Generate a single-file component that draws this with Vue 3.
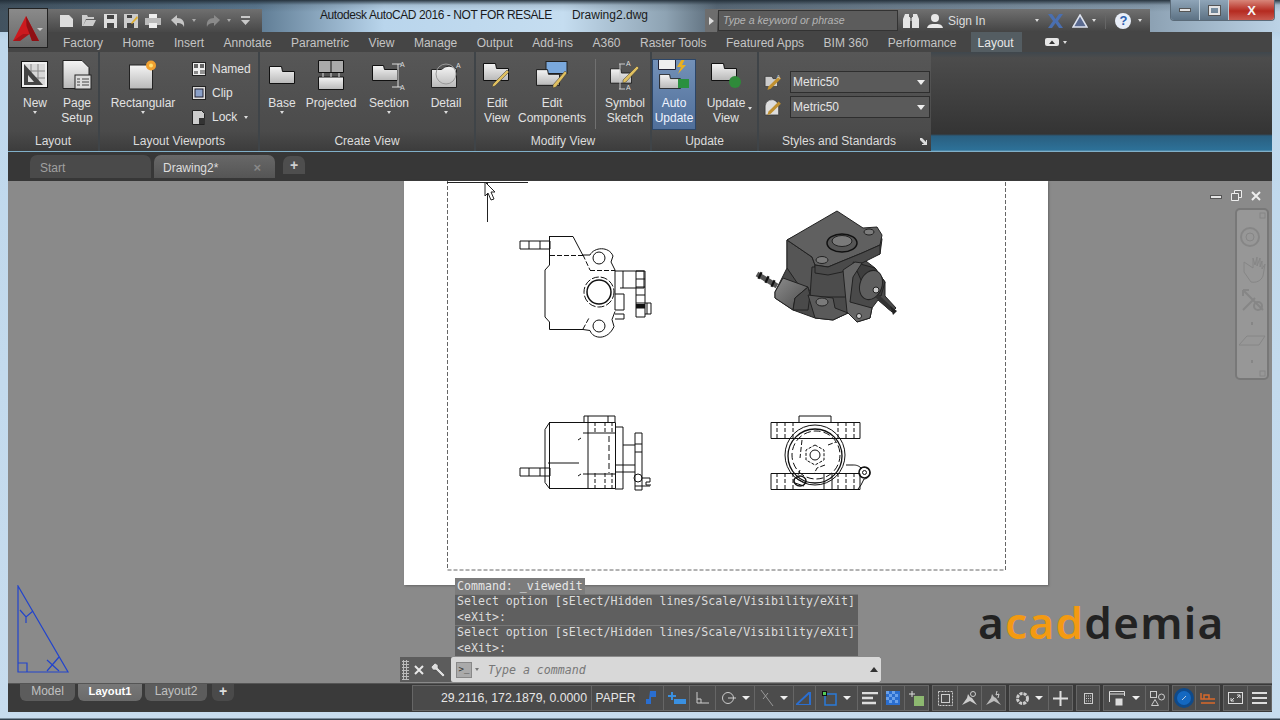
<script setup>
const tabs = ['Factory', 'Home', 'Insert', 'Annotate', 'Parametric', 'View', 'Manage', 'Output', 'Add-ins', 'A360', 'Raster Tools', 'Featured Apps', 'BIM 360', 'Performance']
const history = [
  'Select option [sElect/Hidden lines/Scale/Visibility/eXit]\n<eXit>:',
  'Select option [sElect/Hidden lines/Scale/Visibility/eXit]\n<eXit>:',
]
</script>

<template>
  <div class="window">
    <svg class="defs" width="0" height="0">
      <defs>
        <linearGradient id="sheet" x1="0" y1="0" x2="0" y2="1">
          <stop offset="0" stop-color="#f4f4f4" />
          <stop offset="1" stop-color="#b8b8b8" />
        </linearGradient>
        <linearGradient id="boss" x1="0" y1="0" x2="1" y2="1">
          <stop offset="0" stop-color="#8c8c8c" />
          <stop offset="1" stop-color="#4a4a4a" />
        </linearGradient>
        <symbol id="part" viewBox="0 0 26 18">
          <path d="M.5.5h12l1 5h12v12H.5z" fill="url(#sheet)" stroke="#111" />
        </symbol>
      </defs>
    </svg>

    <div class="appbtn">
      <svg width="26" height="26" viewBox="0 0 26 26">
        <path d="M13 0 L26 25 L19 25 L16.500 18 L10 18 L7 25 L0 25 Z" fill="#cc1a1e" />
        <path d="M13 0 L13.500 10 L16.500 18 L19 25 L26 25 Z" fill="#8f1014" />
        <path d="M0 25 L10 18 L16.500 18 L7 25 Z" fill="#a81418" />
      </svg>
      <i class="caret small"></i>
    </div>

    <header class="titlebar">
      <div class="qat">
        <svg width="15" height="14" viewBox="0 0 15 14"><path d="M1 1h9l4 4v8H1z" fill="#ddd" /></svg>
        <svg width="16" height="13" viewBox="0 0 16 13"><path d="M1 1h5l1 2h6v2H5L2 12H1zM5 6h10l-3 6H2z" fill="#ccc" /></svg>
        <svg width="13" height="14" viewBox="0 0 13 14"><path d="M0 0h13v14H0z" fill="#ddd" /><path d="M3 1h7v4H3zM3 9h7v5H3z" fill="#444" /></svg>
        <svg width="14" height="14" viewBox="0 0 14 14"><path d="M0 0h14v14H0z" fill="#ccc" /><path d="M3 9h7v5H3zM3 1h5v3H3z" fill="#444" /><path d="M7 9l6-7 1 2-6 6z" fill="#e0b030" /></svg>
        <svg width="16" height="14" viewBox="0 0 16 14"><path d="M4 0h8v4H4z" fill="#eee" /><path d="M0 4h16v7H0z" fill="#bbb" /><path d="M4 9h8v5H4z" fill="#eee" /></svg>
        <svg class="gap" width="14" height="12" viewBox="0 0 14 12"><path d="M0 5l6-5v3c5 0 8 3 7 9-1-3-3-4-7-4v3z" fill="#c6c6c6" /></svg>
        <i class="caret dim tiny"></i>
        <svg class="gap" width="14" height="12" viewBox="0 0 14 12"><path d="M14 5L8 0v3C3 3 0 6 1 12c1-3 3-4 7-4v3z" fill="#8a8a8a" /></svg>
        <i class="caret dim tiny"></i>
        <svg class="gap" width="9" height="9" viewBox="0 0 9 9"><path d="M0 0h9v2H0zM0 4h9L4.500 9z" fill="#c8c8c8" /></svg>
      </div>
      <div class="doc-title">
        <span class="product">Autodesk AutoCAD 2016 - NOT FOR RESALE</span>
        <span>Drawing2.dwg</span>
      </div>
      <div class="info">
        <span class="expander"><i></i></span>
        <div class="search">Type a keyword or phrase</div>
        <svg class="bino" width="16" height="15" viewBox="0 0 16 15"><path d="M2 1h4v3h1v11H0V6zM10 1h4l2 5v9H9V4h1z" fill="#e4e4e4" /><path d="M7 5h2v3H7z" fill="#999" /></svg>
        <svg class="user" width="16" height="16" viewBox="0 0 16 16"><circle cx="8" cy="5" r="4" fill="#e8e8e8" /><path d="M0 15c1-4 4-4 8-4s7 0 8 4z" fill="#e8e8e8" /></svg>
        <span class="signin">Sign In</span>
        <i class="caret tiny signcaret"></i>
        <svg class="x-ico" width="15" height="14" viewBox="0 0 15 14"><path d="M0 0h4l3.500 5L11 0h4L10 7l5 7h-4L7.500 9 4 14H0l5-7z" fill="#4a6fb0" /></svg>
        <svg class="a-ico" width="16" height="14" viewBox="0 0 16 14"><path d="M8 1l7 12H1z" fill="#5a6a90" stroke="#dfe4f0" stroke-width="1.500" /></svg>
        <i class="caret tiny"></i>
        <span class="info-sep"></span>
        <span class="help">?</span>
        <i class="caret tiny"></i>
      </div>
      <div class="winbtns">
        <span class="wb"><b class="min"></b></span>
        <span class="wb"><b class="max"></b></span>
        <span class="wb close">X</span>
      </div>
    </header>

    <nav class="tabs">
      <span v-for="t in tabs" :key="t" class="tab">{{ t }}</span>
      <span class="tab active">Layout</span>
      <span class="tab-extra">
        <svg width="14" height="8" viewBox="0 0 14 8"><rect width="14" height="8" rx="2" fill="#e6e6e6" /><path d="M4 6l3-3.500L10 6z" fill="#333" /></svg>
        <i class="caret tiny"></i>
      </span>
    </nav>

    <section class="ribbon">
      <div class="panels">
        <div class="panel p-layout">
          <div class="body">
            <div class="rbtn w42">
              <svg width="28" height="28" viewBox="0 0 28 28"><rect x=".5" y=".5" width="26" height="26" fill="#eee" stroke="#111" /><path d="M3 3h21v21H3z" fill="#d8d8d8" /><path d="M10 3v21M17 3v21M3 10h21M3 17h21" stroke="#888" /><path d="M3 3l19 21H3z" fill="#444" /><path d="M7 14l6 7H7z" fill="#ddd" /></svg>
              <span>New</span><i class="caret tiny"></i>
            </div>
            <div class="rbtn w42">
              <svg width="30" height="30" viewBox="0 0 30 30"><path d="M1 .5h19l7 7v21H1z" fill="url(#sheet)" stroke="#222" /><rect x="13" y="15" width="16" height="14" fill="#ddd" stroke="#222" /><path d="M15 19h3M20 19h7M15 22h3M20 22h7M15 25h3M20 25h7" stroke="#444" /></svg>
              <span>Page<br />Setup</span>
            </div>
          </div>
          <div class="label">Layout</div>
        </div>

        <div class="panel p-vp">
          <div class="body">
            <div class="rbtn w86">
              <svg width="28" height="29" viewBox="0 0 28 29"><rect x=".5" y="4.500" width="23" height="24" fill="url(#sheet)" stroke="#222" /><circle cx="22" cy="5" r="5" fill="#f0a030" /><circle cx="22" cy="5" r="2" fill="#ffe070" /></svg>
              <span>Rectangular</span><i class="caret tiny"></i>
            </div>
            <div class="vp-list">
              <div class="vp-row">
                <svg width="14" height="14" viewBox="0 0 14 14"><rect x=".5" y=".5" width="13" height="13" fill="#eee" stroke="#222" /><path d="M2 2h4v4H2zM8 2h4v4H8z" fill="#666" /><path d="M2 9h4v3H2z" fill="#888" /><path d="M8 9h5M8 11h5" stroke="#333" /></svg>
                Named
              </div>
              <div class="vp-row">
                <svg width="14" height="14" viewBox="0 0 14 14"><rect x=".5" y=".5" width="13" height="13" fill="#ddd" stroke="#222" /><rect x="3" y="3" width="8" height="8" fill="#8aa0c8" stroke="#223" /></svg>
                Clip
              </div>
              <div class="vp-row">
                <svg width="14" height="15" viewBox="0 0 14 15"><path d="M.5.5h9l3 3v11H.5z" fill="#ccc" stroke="#222" /><rect x="7" y="8" width="6" height="6" fill="#333" /></svg>
                Lock <i class="caret tiny"></i>
              </div>
            </div>
          </div>
          <div class="label">Layout Viewports</div>
        </div>

        <div class="panel p-create">
          <div class="body">
            <div class="rbtn w44">
              <svg class="part-top" width="26" height="18"><use href="#part" /></svg>
              <span>Base</span><i class="caret tiny"></i>
            </div>
            <div class="rbtn w54">
              <svg width="26" height="30" viewBox="0 0 26 30"><path d="M.5.5h25v12H.5z" fill="#aaa" stroke="#111" /><path d="M13 .5v12" stroke="#111" /><path d="M.5 17h25v12.500H.5z" fill="url(#sheet)" stroke="#111" /><path d="M5 13v4M13 13v4M21 13v4" stroke="#ddd" /></svg>
              <span>Projected</span>
            </div>
            <div class="rbtn w62">
              <svg width="34" height="30" viewBox="0 0 34 30"><path d="M.5 5.500h11l1 4h13v11H.5z" fill="url(#sheet)" stroke="#111" /><path d="M20 4h6v23h-6M26 4l3 0M26 27l3 0" fill="none" stroke="#ddd" /><text x="28" y="7" class="tinytext">A</text><text x="28" y="30" class="tinytext">A</text></svg>
              <span>Section</span><i class="caret tiny"></i>
            </div>
            <div class="rbtn w52">
              <svg width="30" height="28" viewBox="0 0 30 28"><path d="M.5 8.500h10a10 10 0 0 1 15 0v18H.500z" fill="url(#sheet)" stroke="#222" /><circle cx="15" cy="13" r="10" fill="none" stroke="#999" /><text x="25" y="7" class="tinytext">A</text></svg>
              <span>Detail</span><i class="caret tiny"></i>
            </div>
          </div>
          <div class="label">Create View</div>
        </div>

        <div class="panel p-modify">
          <div class="body">
            <div class="rbtn w42">
              <svg width="28" height="28" viewBox="0 0 28 28"><use href="#part" width="26" height="18" y="2" /><path d="M9 26l3-1 14-14-2-2-14 14z" fill="#e0c060" stroke="#333" stroke-width=".5" /></svg>
              <span>Edit<br />View</span>
            </div>
            <div class="rbtn w68">
              <svg width="32" height="28" viewBox="0 0 32 28"><rect x="10" y=".5" width="21" height="12" fill="#7aa8dc" stroke="#222" /><use href="#part" width="24" height="17" y="8" /><path d="M17 27l3-1 11-14-2-2-12 14z" fill="#e0c060" stroke="#333" stroke-width=".5" /></svg>
              <span>Edit<br />Components</span>
            </div>
            <span class="vsep"></span>
            <div class="rbtn w48">
              <svg width="30" height="32" viewBox="0 0 30 32"><use href="#part" width="22" height="16" y="9" /><path d="M9 5h6M9 30h6M10 5v25" fill="none" stroke="#ccc" /><path d="M13 24l3-1 13-14-2-2-14 14z" fill="#e0c060" stroke="#333" stroke-width=".5" /><text x="16" y="7" class="tinytext">A</text><text x="16" y="31" class="tinytext">A</text></svg>
              <span>Symbol<br />Sketch</span>
            </div>
          </div>
          <div class="label">Modify View</div>
        </div>

        <div class="panel p-update">
          <div class="body">
            <div class="rbtn w44 on">
              <svg width="32" height="32" viewBox="0 0 32 32"><path d="M.5.5h17v10H.5z" fill="#eee" stroke="#223" /><use href="#part" width="24" height="15" y="15" /><path d="M24 0l-5 8h4l-3 7 8-9h-4l3-6z" fill="#e8b020" /><rect x="20" y="20" width="11" height="9" fill="#2a9040" /></svg>
              <span>Auto<br />Update</span>
            </div>
            <div class="rbtn w60">
              <svg width="30" height="28" viewBox="0 0 30 28"><use href="#part" width="26" height="18" y="2" /><circle cx="24" cy="21" r="6" fill="#2f8a3a" /></svg>
              <span>Update<br />View</span>
              <i class="caret tiny side"></i>
            </div>
          </div>
          <div class="label">Update</div>
        </div>

        <div class="panel p-styles">
          <div class="body styles">
            <div class="style-row">
              <svg width="18" height="18" viewBox="0 0 16 16"><path d="M1 3h6l1 2h4v7H1z" fill="#ccc" stroke="#222" stroke-width=".5" /><path d="M3 15l3-1 9-9-2-2-9 9z" fill="#c09030" /><text x="11" y="5" class="tinytext small">A</text></svg>
              <div class="combo">Metric50<i class="caret"></i></div>
            </div>
            <div class="style-row">
              <svg width="18" height="18" viewBox="0 0 16 16"><path d="M1 7a6 6 0 0 1 10-4l2 3v9H1z" fill="#ddd" stroke="#222" stroke-width=".5" /><path d="M3 15l3-1 9-9-2-2-9 9z" fill="#c09030" /></svg>
              <div class="combo">Metric50<i class="caret"></i></div>
            </div>
          </div>
          <div class="label styles-label">
            Styles and Standards
            <svg class="launch" width="7" height="7" viewBox="0 0 7 7"><path d="M0 0h2l4 4V2h1v5H2V6h2L0 2z" fill="#ddd" /></svg>
          </div>
        </div>
      </div>
    </section>

    <div class="filetabs">
      <span class="ftab">Start</span>
      <span class="ftab cur">Drawing2*<em>×</em></span>
      <span class="ftab add">+</span>
    </div>

    <main class="canvas">
      <div class="paper">
        <svg class="sheet" width="644" height="404" viewBox="404 181 644 404">
          <rect x="447.500" y="170" width="558" height="400" fill="none" stroke="#666" stroke-dasharray="4 2" />

          <!-- crosshair and cursor -->
          <path d="M447 182.500h81M487.500 182v40" stroke="#222" fill="none" />
          <path d="M485 182v14l3-3 3 7 3-1-3-7h4z" fill="#fff" stroke="#222" />

          <!-- top left view -->
          <g fill="none" stroke="#111">
            <path d="M550 236.500h23l10 19" />
            <path d="M549.500 236v29l-4.500 5v47l4.500 5v7.500H583l7 1c3 9 18 10 24-4l-2-7 3-8" />
            <path d="M583 255h7c4-8 19-9 23 1l-2 6 4 8v40" />
            <path d="M550 255.500h33M590 270.500h25M583 255l7 15M583 329l6-11" stroke-dasharray="5 2" />
            <circle cx="599" cy="258" r="6" />
            <circle cx="599" cy="326" r="6" />
            <circle cx="599" cy="292" r="12" stroke-width="1.500" />
            <circle cx="599" cy="292" r="15" stroke-dasharray="7 2" />
            <path d="M520 241h30v8h-30zM529 241v8M540 241v8" />
            <path d="M615 271h29v17h-24M623 271v17M615 310h9v-16h-9M615 314h9v5h-9" />
            <path d="M636 271v46h9v-46zM636 279h9M636 287h9M636 295h9M636 303h9M636 308h9" />
            <path d="M645 303h6v11h-6M647 303v11" />
          </g>
          <rect x="636" y="304" width="9" height="4" fill="#111" />

          <!-- isometric view -->
          <path d="M757 274l20 12" stroke="#555" stroke-width="5" />
          <path d="M759 275l2 1M766 279l2 1M772 283l2 1" stroke="#111" stroke-width="7" />
          <path d="M787 240v28l-12 24v6l18 12 22 8 18 2 15-7 9 9 13-4 2-10 6-8 14 12 4-4-11-12v-14l-10-14-13-10 18-4 2-15-5-8-14 1-26-17z" fill="#4a4a4a" stroke="#222" />
          <path d="M787 240l25 17 3 8-3 26-12-4-13-19z" fill="#555" stroke="#222" />
          <path d="M812 267h33l5 30h-40z" fill="#4c4c4c" stroke="#222" />
          <path d="M787 240l50-29 26 17 14-1 5 8-2 10-18 8-22 9-12 5-13-2-3-8z" fill="#606060" stroke="#222" />
          <path d="M840 262l22-9 18-8v9l-20 10-18 8-14 3-13-2v-8l13 2z" fill="#4a4a4a" stroke="#222" />
          <ellipse cx="842" cy="243" rx="15" ry="9" fill="#565656" stroke="#111" stroke-width="1.500" />
          <ellipse cx="842" cy="241" rx="10" ry="5.500" fill="#7a7a7a" stroke="#222" />
          <ellipse cx="822" cy="260" rx="6" ry="3.500" fill="#7c7c7c" stroke="#222" />
          <ellipse cx="869" cy="232" rx="5" ry="3" fill="#7c7c7c" stroke="#222" />
          <path d="M775 292l8-14 14 5 11 4-13 11-2 12-18-12z" fill="url(#boss)" stroke="#222" />
          <path d="M795 298l13-11 2 8-2 15-15 0z" fill="#4a4a4a" stroke="#222" />
          <path d="M808 295l25 3 2 10 13 5-15 7-18-2-3-10z" fill="#5a5a5a" stroke="#222" />
          <ellipse cx="822" cy="302" rx="6" ry="4" fill="#7a7a7a" stroke="#222" />
          <path d="M853 262l22 6 10 14-4 14-12-2-8-14z" fill="#3e3e3e" stroke="#222" />
          <path d="M843 270l12-8 7 1-9 14-3 25 22 6-2 10-13 4-10-10z" fill="#666" stroke="#222" />
          <ellipse cx="871" cy="285" rx="11" ry="15" transform="rotate(20 871 285)" fill="#5e5e5e" stroke="#222" />
          <path d="M877 296l14 13" stroke="#333" stroke-width="4" />
          <circle cx="876" cy="290" r="3" fill="#ccc" stroke="#222" />
          <circle cx="859" cy="316" r="2.500" fill="#ccc" stroke="#222" />
          <path d="M890 306l7 5-4 4z" fill="#222" />

          <!-- bottom left view -->
          <g fill="none" stroke="#111">
            <path d="M549.500 422.500H615.500V488.500H549.500l-4.500-6v-53zM549.500 422v67" />
            <path d="M584 422v-6h31v6M588 416v6M608 416v6" />
            <path d="M595 422v12M605 422v12M612 422v12M595 473v16M605 473v16M612 473v16" stroke-dasharray="4 2" />
            <path d="M609 436v37" stroke-dasharray="6 3" />
            <path d="M548 463h31M581 438l-3 2M581 474l-3 2" />
            <path d="M588 422v67M583 433h32M583 474h32" />
            <path d="M615 427h8v62h-8M623 445h12M615 465h20M615 472h20M635 433h7v57h-7v-57M635 444h7M635 452h7" />
            <path d="M520 468h30v8h-30zM529 468v8M540 468v8" />
            <circle cx="638" cy="478" r="4" />
            <path d="M642 478h8v4h-4v3h5M635 486h15" />
          </g>

          <!-- bottom right view -->
          <g fill="none" stroke="#111">
            <path d="M771 422.500h89v16h-89zM771 473.500h89v16h-89zM799 422v-6h32v6" />
            <path d="M777 422v16M785 422v16M793 422v16M838 422v16M846 422v16M854 422v16M777 473v16M785 473v16M793 473v16M838 473v16M846 473v16M854 473v16" stroke-dasharray="4 2" />
            <circle cx="815" cy="455" r="30" />
            <circle cx="815" cy="456" r="27" stroke-width="1.300" />
            <circle cx="816" cy="455" r="24" stroke-dasharray="7 3" />
            <circle cx="815" cy="455" r="5" />
            <path d="M815 445l9 5v10l-9 5-9-5v-10z" stroke-dasharray="3 1.500" />
            <path d="M802 440l-2 18M828 445l8-3M825 465l-8 3-3 6M800 470l-3 8" stroke-dasharray="5 2" />
            <path d="M846 465h7c2 0 5 0 8 3 4-2 9 1 9 5s-4 6-6 6l-3 6-3 4" />
            <circle cx="864.500" cy="472.500" r="5.500" stroke-width="1.500" />
            <circle cx="864.500" cy="472.500" r="2" />
            <ellipse cx="800" cy="481" rx="6" ry="5" stroke-width="1.500" />
            <path d="M796 478l9 5M795 483l9 3M824 473v16M832 473v16" />
          </g>
        </svg>
      </div>

      <div class="vpctl">
        <b class="min"></b>
        <svg width="11" height="11" viewBox="0 0 11 11"><path d="M3.500.5h7v7h-7z" fill="#777" stroke="#eee" /><path d="M.5 3.500h7v7h-7z" fill="#777" stroke="#eee" /></svg>
        <svg width="10" height="10" viewBox="0 0 10 10"><path d="M1 1l8 8M9 1l-8 8" stroke="#eee" stroke-width="2" /></svg>
      </div>

      <div class="navbar">
        <svg width="30" height="168" viewBox="0 0 30 168" fill="none" stroke="#868686">
          <rect x="23" y="3" width="5" height="5" />
          <circle cx="13" cy="27" r="9" stroke-width="2" />
          <circle cx="13" cy="27" r="4" />
          <path d="M7 52v10l7 10c5 1 10-1 12-6l2-12-3 5v-8l-2 6v-9l-3 8v-9l-2 8-2-7v10z" />
          <path d="M6 80l20 20M6 100l12-12M6 80h6M6 80v6" stroke-width="2" />
          <circle cx="21" cy="96" r="4" stroke-width="2" />
          <path d="M15 112v3M15 150v3" stroke-width="2" />
          <path d="M2 135l8-9h18l-6 9z" />
          <rect x="23" y="161" width="5" height="5" />
        </svg>
      </div>

      <svg class="ucs" width="54" height="90" viewBox="0 0 54 90" fill="none" stroke="#2244cc" stroke-width="1.200">
        <path d="M2 1v86h50z" />
        <path d="M2 78h9v9" />
        <path d="M4 25l6 7 7-6M10 32v6M31 75l12 11M43 72L31 86" />
      </svg>

      <div class="logo"><span>a</span><span class="cad">cad</span><span>demia</span></div>

      <div class="cmd">
        <div class="lines">
          <div class="line first">Command:  _viewedit</div>
          <div v-for="(h, i) in history" :key="i" class="line">{{ h }}</div>
        </div>
        <div class="cmd-bar">
          <span class="grip"></span>
          <svg width="10" height="10" viewBox="0 0 10 10"><path d="M1 1l8 8M9 1l-8 8" stroke="#e8e8e8" stroke-width="2" /></svg>
          <svg width="15" height="15" viewBox="0 0 15 15"><path d="M1 4l3-3 3 2v3l7 7-2 2-7-7H2L0 5z" fill="#ddd" stroke="#333" stroke-width=".5" /></svg>
          <div class="cmd-input">
            <span class="prompt">&gt;_</span>
            <i class="caret tiny grey"></i>
            <span class="ph">Type a command</span>
            <i class="caret up"></i>
          </div>
        </div>
      </div>
    </main>

    <footer class="statusbar">
      <div class="ltabs">
        <span class="ltab">Model</span>
        <span class="ltab cur">Layout1</span>
        <span class="ltab l2">Layout2</span>
        <span class="ltab add">+</span>
      </div>
      <div class="status">
        <span class="coords">29.2116, 172.1879, 0.0000</span>
        <span class="paper-btn">PAPER</span>

        <span class="s w25"><svg width="11" height="16" viewBox="0 0 11 16"><path d="M4 1h6v6H5v7H0V9h3z" fill="#2a6ed0" /></svg></span>
        <span class="s w26"><svg width="18" height="14" viewBox="0 0 18 14"><path d="M4 1v8M0 5h8" stroke="#3a90e0" stroke-width="2" /><rect x="6" y="8" width="12" height="5" fill="#3a90e0" /></svg></span>
        <span class="s w26"><svg width="13" height="12" viewBox="0 0 13 12" fill="none" stroke="#ccc"><path d="M1 0v11h12M1 7h4v4" /></svg></span>
        <span class="s w39">
          <svg width="15" height="14" viewBox="0 0 15 14" fill="none" stroke="#ccc"><circle cx="7" cy="7" r="5.500" /><path d="M7 7h8" /></svg>
          <i class="caret tiny w"></i>
        </span>
        <span class="s w39">
          <svg width="14" height="18" viewBox="0 0 14 18" fill="none" stroke="#999"><path d="M1 1l12 16M8 4l-5 6" /></svg>
          <i class="caret tiny w"></i>
        </span>
        <span class="s w22"><svg width="17" height="13" viewBox="0 0 17 13"><path d="M0 13L14 0v13z" fill="none" stroke="#2a6ed0" stroke-width="2" /></svg></span>
        <span class="s w42">
          <svg width="15" height="15" viewBox="0 0 15 15"><rect x="3" y="3" width="11" height="11" fill="none" stroke="#2a7ad8" stroke-width="1.500" /><rect x="0" y="0" width="5" height="5" fill="#111" /><rect x="1" y="1" width="3" height="3" fill="#5c5" /></svg>
          <i class="caret tiny w"></i>
        </span>
        <span class="s w24"><svg width="16" height="13" viewBox="0 0 16 13"><path d="M0 1h16M0 6h11M0 11h14" stroke="#ddd" stroke-width="2.500" /></svg></span>
        <span class="s w23"><svg width="14" height="14" viewBox="0 0 14 14"><rect width="14" height="14" fill="#2a6ed0" /><path d="M0 0h3v3H0zM6 0h3v3H6zM3 3h3v3H3zM9 3h3v3H9zM0 6h3v3H0zM6 6h3v3H6zM3 9h3v3H3zM9 9h3v3H9z" fill="#6aa0e8" /></svg></span>
        <span class="s w24"><svg width="15" height="15" viewBox="0 0 15 15"><rect x="5" y="5" width="10" height="10" fill="#8db870" /><path d="M3 0v6M0 3h6" stroke="#ddd" /></svg></span>

        <span class="s w26 lead"><svg width="15" height="15" viewBox="0 0 15 15" fill="none" stroke="#ccc"><rect x=".5" y=".5" width="14" height="14" stroke-dasharray="2 1" /><rect x="3.500" y="3.500" width="8" height="8" /></svg></span>
        <span class="s w24"><svg width="16" height="15" viewBox="0 0 16 15"><path d="M0 14l5-7 1-4 2 3 2 1 5 7-7-4z" fill="#ccc" /><circle cx="11" cy="3" r="2.500" fill="none" stroke="#ccc" /></svg></span>
        <span class="s w24"><svg width="16" height="15" viewBox="0 0 16 15"><path d="M0 14l5-7 1-4 2 3 2 1 5 7-7-4z" fill="#bbb" /><path d="M11 0l-1 4 3-1-1 4" fill="none" stroke="#ccc" /></svg></span>

        <span class="s w40 lead">
          <svg width="13" height="13" viewBox="0 0 13 13"><circle cx="6.500" cy="6.500" r="5" fill="none" stroke="#ccc" stroke-width="3" stroke-dasharray="3 1" /></svg>
          <i class="caret tiny w"></i>
        </span>
        <span class="s w24"><svg width="15" height="15" viewBox="0 0 15 15"><path d="M7.500 0v15M0 7.500h15" stroke="#ddd" stroke-width="2" /></svg></span>
        <span class="s w24 lead"><svg width="9" height="11" viewBox="0 0 9 11"><rect x=".5" y=".5" width="8" height="10" fill="none" stroke="#ccc" /><path d="M2 3h5M2 5.500h5M2 8h5" stroke="#ccc" stroke-dasharray="1 1" /></svg></span>
        <span class="s w43 lead">
          <svg width="17" height="15" viewBox="0 0 17 15" fill="none" stroke="#ddd"><path d="M.5 11V.5h15V5M.5 3h15" /><rect x="7" y="8" width="6" height="6" fill="#ddd" /></svg>
          <i class="caret tiny w"></i>
        </span>
        <span class="s w23"><svg width="15" height="15" viewBox="0 0 15 15" fill="none" stroke="#ccc"><rect x=".5" y=".5" width="6" height="6" /><circle cx="11.500" cy="6" r="3" /><path d="M5 8.500l3.500 6h-7z" /></svg></span>
        <span class="s w24 lead"><span class="globe"><svg width="14" height="14" viewBox="0 0 14 14"><circle cx="7" cy="7" r="7" fill="#1468c0" /><path d="M5 9l4-4" stroke="#bcd" /></svg></span></span>
        <span class="s w24"><svg width="15" height="11" viewBox="0 0 15 11" fill="none" stroke="#d8682a" stroke-width="1.500"><path d="M1 0v6h14M4 6V2h5v4M1 10h14" /></svg></span>
        <span class="s w25 lead"><svg width="15" height="12" viewBox="0 0 15 12"><rect x=".5" y=".5" width="14" height="11" fill="none" stroke="#ddd" /><path d="M3 9l3-3M3 6v3h3M12 3L9 6M9 3h3v3" stroke="#ddd" fill="none" /></svg></span>
        <span class="s w24"><svg width="15" height="12" viewBox="0 0 15 12"><path d="M0 1h15M0 6h15M0 11h15" stroke="#ddd" stroke-width="2" /></svg></span>
      </div>
    </footer>
  </div>
</template>

<style scoped>
.window {
  position: relative;
  width: 1280px;
  height: 720px;
  box-sizing: border-box;
  padding: 0 8px 8px;
  overflow: hidden;
  display: flex;
  flex-direction: column;
  background: linear-gradient(180deg, #26333d 0, #9bbad3 3px, #bfd8ec 40px, #c7dcee 718px, #33424e 719px);
  font-family: "Liberation Sans", "Noto Sans", sans-serif;
  font-size: 12px;
  color: #e4e4e4;
}
.defs { position: absolute; }

.caret { display: inline-block; width: 0; height: 0; border: 4px solid transparent; border-top: 5px solid #eee; border-bottom: 0; }
.caret.tiny { border-width: 3px 2.500px 0; border-top-color: #ddd; }
.caret.tiny.dim { border-top-color: #aaa; }
.caret.tiny.grey { border-top-color: #777; }
.caret.tiny.w { border-width: 4px 4px 0; border-top-color: #eee; }
.caret.small { border-width: 3px 3px 0; border-top-color: #ccc; }
.caret.up { border-top: 0; border-bottom: 5px solid #333; }

.appbtn {
  position: absolute;
  left: 8px;
  top: 8px;
  z-index: 2;
  width: 40px;
  height: 40px;
  box-sizing: border-box;
  padding: 7px 0 0 4px;
  border: 1px solid #222;
  background: linear-gradient(180deg, #8a8a8a, #6a6a6a);
}
.appbtn .caret { position: absolute; right: 4px; top: 19px; }

/* title row */
.titlebar {
  height: 32px;
  flex: none;
  display: flex;
  align-items: flex-end;
  margin: 0 -8px;
  padding: 0 8px;
  background:
    linear-gradient(180deg, rgba(34, 46, 56, .95) 0, rgba(34, 46, 56, .15) 5px, rgba(34, 46, 56, 0) 12px),
    linear-gradient(90deg, #42525f 0, #5d7a92 20%, #b9d5ec 30%, #c5ddf0 44%, #8ea3b3 52%, #5a6a78 56%, #8da2b4 90%, #bcd3e6 100%);
}
.qat {
  margin-left: 40px;
  width: 214px;
  height: 23px;
  box-sizing: border-box;
  padding-left: 11px;
  display: flex;
  align-items: center;
  gap: 7px;
  background: linear-gradient(180deg, #6f6f6f, #484848);
}
.qat .gap { margin-left: 3px; }
.doc-title {
  position: absolute;
  left: 320px;
  top: 7px;
  display: flex;
  gap: 20px;
  color: #1a1a1a;
  font-size: 12px;
  line-height: 17px;
}
.product { letter-spacing: -.42px; }
.info {
  position: absolute;
  left: 705px;
  top: 9px;
  width: 445px;
  height: 23px;
  display: flex;
  align-items: center;
  background: linear-gradient(180deg, #707070, #444);
}
.expander { width: 12px; height: 23px; display: flex; align-items: center; justify-content: center; background: #6d6d6d; }
.expander i { border: 4px solid transparent; border-left: 5px solid #ddd; border-right: 0; }
.search {
  width: 180px;
  height: 21px;
  margin-left: 1px;
  padding-left: 4px;
  box-sizing: border-box;
  border: 1px solid #333;
  background: #5c5c5c;
  color: #b4b4b4;
  font-size: 10.600px;
  font-style: italic;
  line-height: 18px;
}
.bino { margin-left: 5px; }
.user { margin-left: 8px; }
.signin { margin-left: 5px; color: #ddd; }
.signcaret { margin-left: 50px; }
.x-ico { margin-left: 9px; }
.a-ico { margin-left: 9px; margin-right: 4px; }
.info-sep { width: 1px; height: 16px; margin: 0 9px; background: #666; }
.help {
  width: 16px;
  height: 16px;
  margin-right: 7px;
  border-radius: 50%;
  background: #e8eef8;
  color: #2d5fb0;
  font-weight: 700;
  font-size: 13px;
  line-height: 16px;
  text-align: center;
}
.winbtns { position: absolute; left: 1170px; top: 0; display: flex; height: 20px; border: 1px solid #5a6a78; border-top: 0; border-radius: 0 0 4px 4px; overflow: hidden; }
.wb { width: 28px; height: 20px; display: flex; align-items: center; justify-content: center; background: linear-gradient(180deg, #8fa5b8, #5d7284); border-right: 1px solid #b8c8d4; }
.wb.close { width: 45px; border: 0; background: linear-gradient(180deg, #d8867a, #b52a20 55%, #c85a50); color: #f4f4f4; font-weight: 700; font-size: 13px; }
.min { display: block; width: 12px; height: 4px; background: #e4e4e4; border: 1px solid #555; box-sizing: border-box; }
.max { display: block; width: 11px; height: 9px; border: 2px solid #e4e4e4; box-sizing: border-box; outline: 1px solid #555; }

/* ribbon tabs */
.tabs {
  height: 20px;
  flex: none;
  display: flex;
  gap: 19.500px;
  padding-left: 55px;
  align-items: center;
  background: #454545;
  color: #c4c4c4;
}
.tab { height: 20px; line-height: 23px; white-space: nowrap; }
.tab.active { margin-left: -5.400px; padding: 0 8px 0 7px; background: #545d62; color: #e8e8e8; }
.tab-extra { margin-left: 4px; display: flex; align-items: center; gap: 4px; }

/* ribbon */
.ribbon {
  height: 100px;
  flex: none;
  box-sizing: border-box;
  background: linear-gradient(180deg, #3f474d 0, #4c4c4c 6px, #343434 82px, #2a5f80 84px, #2d7198 98px, #9cc4d8 100%);
}
.panels { display: flex; height: 99px; width: 923px; background: linear-gradient(180deg, #575757, #484848); }
.panel { display: flex; flex-direction: column; border-right: 2px solid #3f4448; box-sizing: border-box; }
.p-layout { width: 92px; }
.p-vp { width: 160px; }
.p-create { width: 216px; }
.p-modify { width: 176px; }
.p-update { width: 107px; }
.p-styles { width: 172px; border-right: 0; }
.body { flex: 1; display: flex; padding-top: 7px; min-height: 0; }
.p-layout .body { padding-left: 6px; }
.label {
  position: relative;
  height: 20px;
  line-height: 21px;
  text-align: center;
  background: linear-gradient(180deg, #4b4b4b, #3c3c3c);
  color: #dcdcdc;
}
.styles-label { padding-right: 12px; }
.launch { position: absolute; right: 4px; top: 7px; }
.rbtn {
  position: relative;
  height: 71px;
  flex: none;
  display: flex;
  flex-direction: column;
  align-items: center;
  text-align: center;
  line-height: 15px;
  color: #e2e2e2;
}
.rbtn svg { height: 32px; margin-bottom: 5px; flex: none; overflow: visible; }
.rbtn span { display: block; }
.rbtn .side { position: absolute; right: 4px; top: 48px; }
.rbtn.on { background: linear-gradient(180deg, #7391b8, #4f6e99); outline: 1px solid #2c4668; outline-offset: -1px; color: #f0f4ff; }
.w42 { width: 42px; }
.w44 { width: 44px; }
.w48 { width: 48px; }
.w52 { width: 52px; }
.w54 { width: 54px; }
.w60 { width: 60px; }
.w62 { width: 62px; }
.w68 { width: 68px; }
.w86 { width: 86px; }
.vsep { width: 1px; height: 70px; margin: 0 5px 0 9px; background: #707070; flex: none; }
.vp-list { margin: -2px 0 0 6px; display: flex; flex-direction: column; gap: 0; }
.vp-row { height: 24px; display: flex; align-items: center; gap: 6px; }
.vp-row .caret { margin-left: 1px; }
.styles { flex-direction: column; padding: 19px 0 0 5px; gap: 3px; }
.style-row { display: flex; align-items: center; gap: 8px; }
.combo {
  position: relative;
  width: 140px;
  height: 22px;
  box-sizing: border-box;
  border: 1px solid #2e2e2e;
  padding-left: 2px;
  line-height: 20px;
  background: #5a5a5a;
  color: #e4e4e4;
}
.combo .caret { position: absolute; right: 4px; top: 8px; }
.tinytext { fill: #ddd; font-size: 7px; font-family: "Liberation Sans", sans-serif; }
.tinytext.small { font-size: 5px; }

/* file tabs */
.filetabs {
  height: 29px;
  flex: none;
  display: flex;
  align-items: flex-end;
  box-sizing: border-box;
  padding: 0 0 3px 22px;
  gap: 3px;
  background: #373737;
}
.ftab {
  position: relative;
  width: 121px;
  height: 23px;
  box-sizing: border-box;
  padding-left: 10px;
  line-height: 26px;
  color: #a0a0a0;
  background: #4a4a4a;
  border-radius: 7px 7px 0 0;
}
.ftab.cur { width: 121px; padding-left: 9px; background: linear-gradient(180deg, #686868, #555); color: #dedede; }
.ftab em { position: absolute; right: 14px; top: 0; font-style: normal; font-weight: 700; font-size: 13px; color: #888; }
.ftab.add { width: 22px; padding: 0; text-align: center; margin-left: 5px; height: 18px; line-height: 19px; font-weight: 700; font-size: 14px; color: #cfcfcf; background: #4e4e4e; align-self: center; }

/* drawing area */
.canvas {
  position: relative;
  flex: 1;
  min-height: 0;
  background: #8a8a8a;
}
.paper {
  position: absolute;
  left: 396px;
  top: 0;
  width: 644px;
  height: 404px;
  background: #fff;
  box-shadow: 1px 1px 2px #666;
}
.sheet { display: block; }
.vpctl { position: absolute; left: 1202px; top: 9px; display: flex; align-items: center; gap: 9px; }
.vpctl .min { margin-top: 3px; }
.navbar {
  position: absolute;
  left: 1227px;
  top: 27px;
  width: 34px;
  height: 172px;
  box-sizing: border-box;
  border: 2px solid #787878;
  border-radius: 5px;
  background: #979797;
}
.ucs { position: absolute; left: 8px; top: 404px; }
.logo {
  position: absolute;
  left: 970px;
  top: 411px;
  font-family: "Noto Sans", sans-serif;
  font-weight: 600;
  font-size: 44px;
  line-height: 60px;
  letter-spacing: 1.300px;
  color: #222;
  white-space: nowrap;
}
.logo .cad { color: #f39a12; }

.cmd { position: absolute; left: 392px; top: 397px; width: 481px; }
.lines { margin-left: 55px; }
.line {
  width: 403px;
  box-sizing: border-box;
  padding: 0 0 0 2px;
  background: #5f5f5f;
  box-shadow: inset 0 1px #777;
  color: #dcdcdc;
  font-family: "DejaVu Sans Mono", monospace;
  font-size: 11.600px;
  line-height: 15.500px;
  white-space: pre-wrap;
}
.line.first { width: 130px; height: 16px; line-height: 17px; background: #7c7c7c; box-shadow: none; color: #e6e6e6; }
.line:not(.first) { position: relative; top: 0; }
.cmd-bar { height: 25px; margin-top: 1px; display: flex; align-items: center; background: #5c5c5c; }
.grip { width: 7px; height: 20px; margin-left: 2px; margin-right: 5px; background-image: radial-gradient(#bbb 1px, transparent 1.200px); background-size: 3px 3px; }
.cmd-bar > svg:nth-of-type(2) { margin-left: 7px; }
.cmd-input {
  position: relative;
  flex: 1;
  height: 25px;
  margin-left: 5px;
  display: flex;
  align-items: center;
  background: #d8d8d8;
  color: #777;
  border-radius: 2px;
}
.prompt { margin-left: 5px; width: 14px; height: 14px; line-height: 13px; text-align: center; font-size: 9px; font-family: "DejaVu Sans Mono", monospace; color: #333; background: #aaa; border: 1px solid #888; }
.cmd-input .caret.grey { margin-left: 3px; }
.ph { margin-left: 9px; font-family: "DejaVu Sans Mono", monospace; font-size: 11.600px; font-style: italic; }
.cmd-input .up { position: absolute; right: 3px; top: 10px; }

/* status row */
.statusbar {
  height: 29px;
  flex: none;
  display: flex;
  align-items: stretch;
  background: #3a3a3a;
  border-top: 1px solid #555;
  box-sizing: border-box;
}
.ltabs { width: 404px; flex: none; display: flex; align-items: flex-start; padding-left: 12px; box-sizing: border-box; }
.ltab { width: 55px; height: 17px; line-height: 15px; text-align: center; color: #c0c0c0; background: #5c5c5c; border-radius: 0 0 6px 6px; margin-right: 3px; }
.ltab.cur { background: linear-gradient(180deg, #777, #6a6a6a); color: #fff; font-weight: 700; font-size: 11.200px; width: 64px; }
.ltab.l2 { width: 62px; margin-right: 5px; }
.ltab.add { width: 22px; font-weight: 700; font-size: 14px; color: #ddd; background: #4a4a4a; }
.status { flex: 1; display: flex; align-items: stretch; margin-top: 1px; }
.coords { width: 180px; flex: none; box-sizing: border-box; padding-right: 4px; font-size: 12.300px; line-height: 24px; height: 26px; text-align: right; color: #e6e6e6; background: #4a4a4a; border: 1px solid #666; }
.paper-btn { width: 47px; flex: none; height: 26px; box-sizing: border-box; line-height: 24px; text-align: center; color: #e6e6e6; background: #4a4a4a; border-bottom: 1px solid #666; border-top: 1px solid #666; }
.s {
  flex: none;
  height: 26px;
  box-sizing: border-box;
  display: flex;
  align-items: center;
  justify-content: center;
  gap: 6px;
  background: #4c4c4c;
  border: 1px solid #666;
  border-left: 0;
}
.s.lead { margin-left: 3px; border-left: 1px solid #666; }
.w22 { width: 22px; }
.w23 { width: 23px; }
.w24 { width: 24px; }
.w25 { width: 25px; }
.w26 { width: 26px; }
.w39 { width: 39px; }
.w40 { width: 40px; }
.w43 { width: 43px; }
.globe { display: flex; width: 20px; height: 20px; align-items: center; justify-content: center; border-radius: 50%; background: #0f4a8a; }
</style>

<style>
html, body { margin: 0; background: #c7dcee; }
</style>
